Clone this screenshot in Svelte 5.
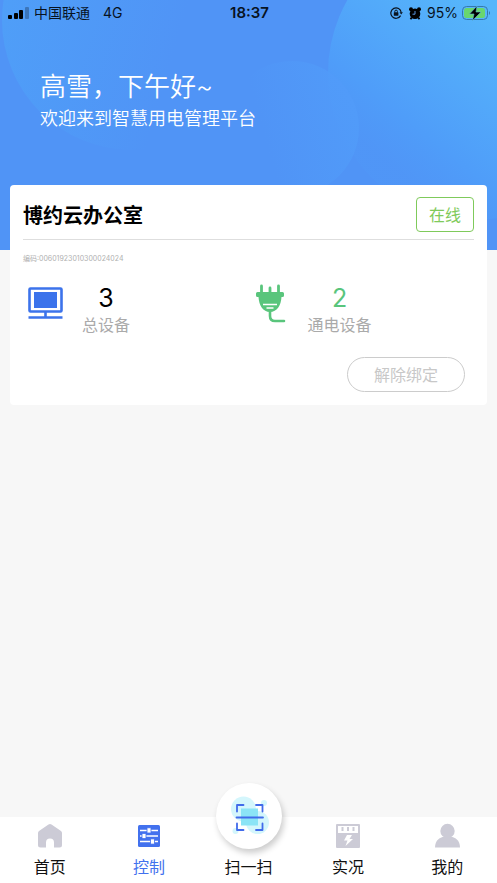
<script>
  const code = '00601923010300024024';
  const tabs = [
    { id: 'home', label: '首页' },
    { id: 'control', label: '控制' },
    { id: 'scan', label: '扫一扫' },
    { id: 'live', label: '实况' },
    { id: 'mine', label: '我的' }
  ];
  let active = $state('control');
</script>

<div class="page">
  <header class="hero">
    <svg class="backdrop" viewBox="0 0 497 250" preserveAspectRatio="none" aria-hidden="true">
      <defs>
        <linearGradient id="corner" gradientUnits="userSpaceOnUse" x1="497" y1="20" x2="385" y2="160">
          <stop offset="0" stop-color="#56b6fb" />
          <stop offset="0.75" stop-color="#4f9df9" />
          <stop offset="1" stop-color="#4f9af8" stop-opacity="0.3" />
        </linearGradient>
        <linearGradient id="left" x1="0" y1="0.3" x2="0.7" y2="0.5">
          <stop offset="0" stop-color="#4f9ff8" />
          <stop offset="1" stop-color="#4f9ff8" stop-opacity="0" />
        </linearGradient>
        <linearGradient id="middle" x1="1" y1="0.4" x2="0.3" y2="0.6">
          <stop offset="0" stop-color="#519bf9" />
          <stop offset="1" stop-color="#519bf9" stop-opacity="0" />
        </linearGradient>
      </defs>
      <rect width="497" height="250" fill="#5094f6" />
      <circle cx="132" cy="20" r="130" fill="url(#left)" />
      <circle cx="475" cy="73" r="147" fill="url(#corner)" />
      <circle cx="292" cy="128" r="67" fill="url(#middle)" />
    </svg>

    <div class="status">
      <div class="side">
        <svg width="21" height="12" viewBox="0 0 21 12" aria-hidden="true">
          <rect x="0" y="8" width="4" height="4" rx="1" />
          <rect x="6" y="6" width="4" height="6" rx="1" />
          <rect x="11" y="3" width="4" height="9" rx="1" />
          <rect x="17" y="0" width="4" height="12" rx="1" opacity="0.25" />
        </svg>
        <span class="carrier">中国联通</span>
        <span class="network">4G</span>
      </div>
      <time>18:37</time>
      <div class="side end">
        <svg width="13" height="12" viewBox="0 0 13 12" fill="none" stroke="#0a1420" aria-hidden="true">
          <path d="M10.6 8.6A5.2 5.2 0 1 1 11.2 5.5" stroke-width="1.2" />
          <path d="M9.5 5.2h3.4l-1.7 2.3z" fill="#0a1420" stroke="none" />
          <rect x="3.8" y="5.3" width="4.6" height="3.5" rx="0.5" fill="#0a1420" stroke="none" />
          <path d="M4.8 5.500V4.400a1.300 1.300 0 0 1 2.600 0v1.100" />
        </svg>
        <svg class="alarm" width="12" height="13" viewBox="0 0 12 13" aria-hidden="true">
          <circle cx="6" cy="6.800" r="5.300" />
          <circle cx="2" cy="2.200" r="2" />
          <circle cx="10" cy="2.200" r="2" />
          <path d="M2.700 10.500L1.500 12.300M9.300 10.500l1.200 1.800" stroke="#000" stroke-width="1.800" />
          <path d="M6 4v3.200H3.500" fill="none" stroke="#65a6f6" stroke-width="0.900" />
        </svg>
        <span>95%</span>
        <svg width="29" height="16" viewBox="0 0 29 16" aria-hidden="true">
          <rect x="0.5" y="1.5" width="25" height="13" rx="4" fill="none" stroke="#3679ab" />
          <rect x="2" y="3" width="21" height="10" rx="2.5" fill="#69d66e" />
          <path d="M27 6q2 2 0 4z" fill="#3679ab" />
          <path d="M15 1L7.500 9H12l-1.500 6.500L19 7h-5z" stroke="#62b9d8" stroke-width="0.600" />
        </svg>
      </div>
    </div>

    <div class="welcome">
      <h1>高雪，下午好~</h1>
      <p>欢迎来到智慧用电管理平台</p>
    </div>
  </header>

  <main>
    <section class="card">
      <div class="head">
        <h2>博约云办公室</h2>
        <button class="online" type="button">在线</button>
      </div>
      <p class="code">编码:{code}</p>
      <div class="stats">
        <div class="stat">
          <svg width="36" height="40" viewBox="0 0 36 40" fill="none" stroke="#3c73eb" aria-hidden="true">
            <rect x="1.5" y="5.5" width="32" height="23" rx="1" stroke-width="2.6" />
            <rect x="6" y="9" width="23" height="16" fill="#3c73eb" stroke="none" />
            <path d="M17.5 29v5M0.5 34.5h34" stroke-width="2.6" />
          </svg>
          <div class="figure"><strong>3</strong><span>总设备</span></div>
        </div>
        <div class="stat">
          <svg width="36" height="40" viewBox="-2 0 36 40" fill="none" stroke="#59c57c" aria-hidden="true">
            <path d="M5.500 3v8M14 5v6M22.500 3v8" stroke-width="2.800" stroke-linecap="round" />
            <path d="M1.500 9h25a1.500 1.500 0 0 1 1.500 1.500v2a1.500 1.500 0 0 1-1.500 1.500h-1C25 22.500 21 29 14 29S3 22.500 2.500 14h-1A1.500 1.500 0 0 1 0 12.500v-2A1.500 1.500 0 0 1 1.500 9z" fill="#59c57c" stroke="none" />
            <path d="M7 21.500h14M10.500 25h7" stroke="#fff" stroke-width="1.300" />
            <path d="M14 28v5q0 5 5 5h9" stroke-width="2.600" stroke-linecap="round" />
          </svg>
          <div class="figure powered"><strong>2</strong><span>通电设备</span></div>
        </div>
      </div>
      <div class="actions"><button class="unbind" type="button">解除绑定</button></div>
    </section>
  </main>

  <nav>
    {#each tabs as tab (tab.id)}
      <button type="button" class="tab" class:active={active === tab.id} onclick={() => (active = tab.id)}>
        {#if tab.id === 'home'}
          <svg width="26" height="26" viewBox="0 0 26 26" aria-hidden="true">
            <path d="M11.500 1.500q1.500-1.200 3 0L24 8q1 .8 1 2v12q0 2.500-2.500 2.500H17V19.500a4 4 0 0 0-8 0v5H3.500Q1 24.500 1 22V10q0-1.200 1-2z" fill="#cccbd6" />
          </svg>
        {:else if tab.id === 'control'}
          <svg width="26" height="26" viewBox="0 0 26 26" aria-hidden="true">
            <rect x="2" y="2" width="22" height="22" rx="1.500" fill="#4271ee" />
            <path d="M4 7.500h18M4 13h18M4 18.500h18" stroke="#fff" stroke-width="1.500" />
            <g fill="#fff" stroke="#4271ee" stroke-width="0.800">
              <rect x="11" y="4.800" width="4" height="5.200" />
              <rect x="6" y="10.400" width="4" height="5.200" />
              <rect x="14.500" y="15.900" width="4" height="5.200" />
            </g>
          </svg>
        {:else if tab.id === 'scan'}
          <span class="bubble">
            <svg width="40" height="40" viewBox="0 0 40 40" fill="none" aria-hidden="true">
              <g fill="#d4f6fc">
                <circle cx="14.500" cy="13" r="12.500" />
                <circle cx="28.500" cy="26.500" r="11.500" />
                <circle cx="35" cy="7" r="3" />
                <circle cx="6.500" cy="35" r="3" />
              </g>
              <path d="M12 12.500h17v17H12z" fill="#8be4f6" />
              <path d="M8 15.500V9h6.500M27 9h6.500V15.500M8 27.500V34h6.500M27 34h6.500V27.500M7.500 21.500h26.500" stroke="#416bea" stroke-width="1.800" stroke-linejoin="round" stroke-linecap="round" />
            </svg>
          </span>
        {:else if tab.id === 'live'}
          <svg width="26" height="26" viewBox="0 0 26 26" aria-hidden="true">
            <rect x="1" y="1" width="24" height="24" rx="1" fill="#cccbd6" />
            <path d="M3 3h20v7H3z" fill="#fff" />
            <path d="M7.500 4v4M13 4v4M18.500 4v4" stroke="#cccbd6" stroke-width="2" />
            <path d="M12 12h5l-2.500 4H18l-7.500 7 2-5.500H9z" fill="#fff" />
          </svg>
        {:else}
          <svg width="26" height="26" viewBox="0 0 26 26" aria-hidden="true">
            <circle cx="13.500" cy="8" r="7.200" fill="#cccbd6" />
            <path d="M1 24.500C1 17 6 14 11 13.500h5c5 .5 10 3.500 10 11z" fill="#cccbd6" />
          </svg>
        {/if}
        <span>{tab.label}</span>
      </button>
    {/each}
  </nav>
</div>

<style>
  :global(body) {
    margin: 0;
    background: #f7f7f7;
  }
  .page {
    min-height: 100vh;
    display: flex;
    flex-direction: column;
    font-family: Inter, 'Noto Sans CJK SC', sans-serif;
    color: #000;
  }
  h1, h2, p {
    margin: 0;
    font-weight: 400;
  }
  svg {
    display: block;
    flex: none;
  }
  button {
    font: inherit;
    padding: 0;
    background: none;
    cursor: pointer;
  }
  .hero {
    position: relative;
    height: 250px;
  }
  .backdrop {
    position: absolute;
    inset: 0;
    width: 100%;
    height: 100%;
  }
  .status {
    position: relative;
    display: flex;
    align-items: center;
    height: 26px;
    padding: 0 6px 0 8px;
    font-size: 14px;
    line-height: 20px;
    color: #08131f;
  }
  .side {
    flex: 1;
    display: flex;
    align-items: center;
  }
  .end {
    justify-content: flex-end;
    gap: 4px;
  }
  .alarm {
    margin: 0 2px;
  }
  .carrier {
    margin: 0 13px 0 5px;
  }
  time {
    font-size: 15px;
    font-weight: 600;
  }
  .welcome {
    position: relative;
    padding: 42px 40px 0;
    color: #fff;
  }
  h1 {
    font-size: 26px;
    line-height: 38px;
    font-weight: 350;
  }
  .welcome p {
    font-size: 18px;
    line-height: 26px;
    font-weight: 350;
  }
  main {
    flex: 1;
    position: relative;
    margin-top: -65px;
    padding: 0 10px;
  }
  .card {
    padding: 12px 13px 13px;
    border-radius: 4px;
    background: #fff;
  }
  .head {
    display: flex;
    align-items: center;
    justify-content: space-between;
    padding-bottom: 7px;
    border-bottom: 1px solid #dedede;
  }
  h2 {
    padding-top: 2px;
    font-size: 20px;
    line-height: 32px;
    font-weight: 700;
  }
  .online {
    width: 58px;
    height: 35px;
    padding-bottom: 2px;
    border: 1px solid #7fca5b;
    border-radius: 4px;
    font-size: 16px;
    color: #7fca5b;
  }
  .code {
    margin-top: 13px;
    font-size: 7px;
    line-height: 12px;
    color: #b0b0b0;
  }
  .stats {
    display: flex;
    margin-top: 18px;
  }
  .stat {
    flex: 1;
    display: flex;
    gap: 18px;
    padding-left: 5px;
  }
  .figure {
    display: flex;
    flex-direction: column;
    align-items: center;
    font-size: 16px;
    line-height: 24px;
    color: #aaa;
  }
  strong {
    font-size: 25px;
    line-height: 30px;
    font-weight: 400;
    color: #000;
  }
  .powered strong {
    color: #59c57c;
  }
  .actions {
    display: flex;
    justify-content: flex-end;
    margin-top: 20px;
    padding-right: 9px;
  }
  .unbind {
    width: 118px;
    height: 35px;
    padding-bottom: 2px;
    border: 1px solid #ccc;
    border-radius: 18px;
    font-size: 16px;
    color: #c8c8c8;
  }
  nav {
    position: sticky;
    bottom: 0;
    display: flex;
    height: 66px;
    background: #fff;
  }
  .tab {
    flex: 1;
    display: flex;
    flex-direction: column;
    align-items: center;
    justify-content: flex-end;
    gap: 6px;
    padding-bottom: 4px;
    border: 0;
    font-size: 16px;
    line-height: 24px;
    color: #111;
  }
  .active {
    color: #4271ee;
  }
  .bubble {
    display: flex;
    align-items: center;
    justify-content: center;
    flex: none;
    width: 66px;
    height: 66px;
    border-radius: 50%;
    background: #fff;
    box-shadow: 2px 4px 6px rgba(0, 0, 0, 0.2);
  }
</style>
